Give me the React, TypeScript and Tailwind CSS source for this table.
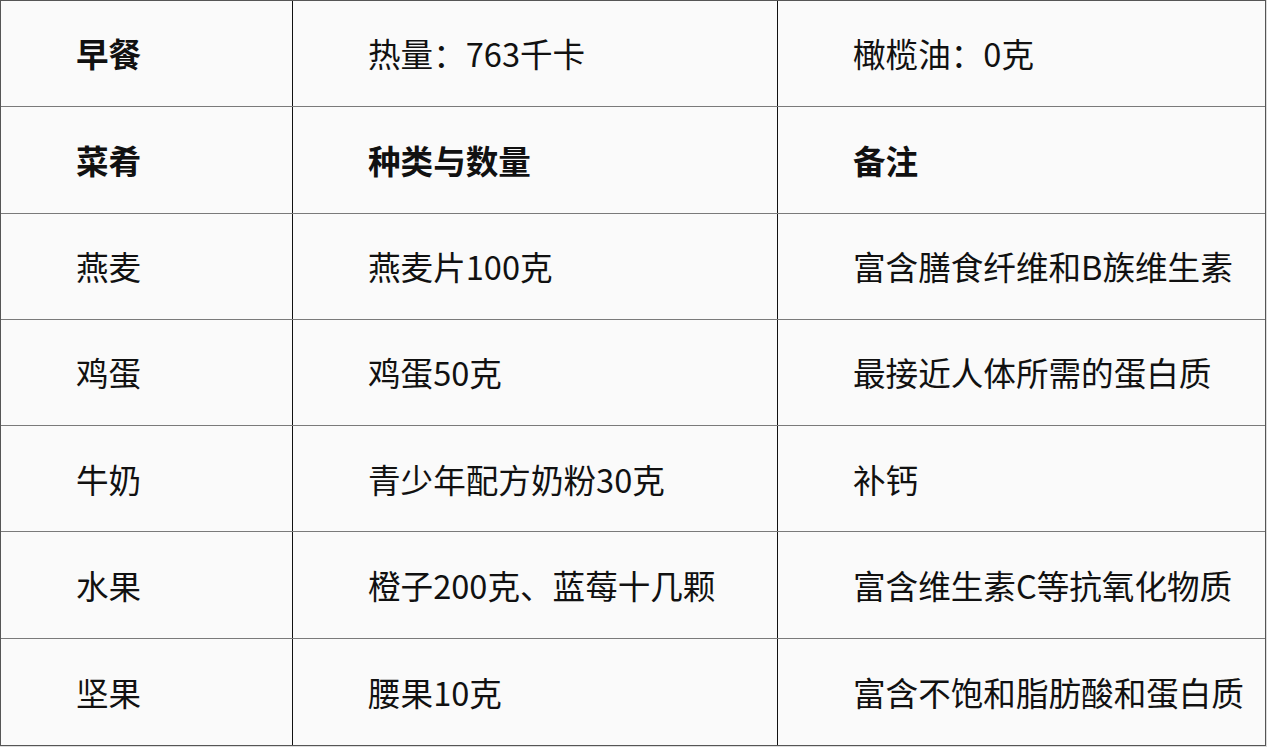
import React from 'react';

const rows: { cells: string[]; bold: boolean[] }[] = [
    { cells: ['早餐', '热量：763千卡', '橄榄油：0克'], bold: [true, false, false] },
    { cells: ['菜肴', '种类与数量', '备注'], bold: [true, true, true] },
    { cells: ['燕麦', '燕麦片100克', '富含膳食纤维和B族维生素'], bold: [false, false, false] },
    { cells: ['鸡蛋', '鸡蛋50克', '最接近人体所需的蛋白质'], bold: [false, false, false] },
    { cells: ['牛奶', '青少年配方奶粉30克', '补钙'], bold: [false, false, false] },
    { cells: ['水果', '橙子200克、蓝莓十几颗', '富含维生素C等抗氧化物质'], bold: [false, false, false] },
    { cells: ['坚果', '腰果10克', '富含不饱和脂肪酸和蛋白质'], bold: [false, false, false] },
];

const colWidths = ['w-[292px]', 'w-[485px]', 'flex-1'];

const App: React.FC = () => {
    return (
        <div className="min-h-screen bg-[#dcdcdc]">
            <div
                className="w-[1266px] bg-[#fafafa] border border-[#555] text-[#111] text-[32.6px] leading-none"
                style={{ fontFamily: '"Noto Sans CJK SC", "Noto Sans", sans-serif' }}
            >
                {rows.map((row, i) => (
                    <div
                        key={i}
                        className={`flex h-[106.3px] ${i < rows.length - 1 ? 'border-b border-[#7a7a7a]' : ''}`}
                    >
                        {row.cells.map((cell, j) => (
                            <div
                                key={j}
                                className={`${colWidths[j]} flex items-center pl-[75px] ${j < 2 ? 'border-r border-r-[#111]' : ''} ${row.bold[j] ? 'font-bold' : 'font-normal'}`}
                            >
                                {cell}
                            </div>
                        ))}
                    </div>
                ))}
            </div>
        </div>
    );
};

export default App;
